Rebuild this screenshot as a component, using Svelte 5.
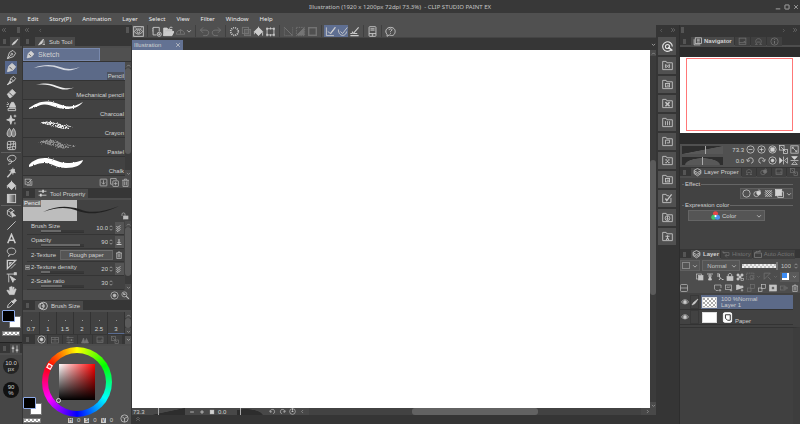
<script>
  const icons = {
    pen: '<path d="M2 14 5 5 10 2l4 4-3 5z"/><path d="M2 14l5-5"/><circle cx="8.500" cy="7.500" r="1.300"/>',
    marker: '<path d="M2 14 4 6l5-4 5 5-4 5z" fill="currentColor"/><path d="M5 7l4 4" stroke="#444"/>',
    brushpen: '<path d="M2 14l3-3 2-6 4-3 3 3-3 4-6 3z"/><path d="M2 14l4-5 2 2z" fill="currentColor"/><path d="M7 5l4 4"/>',
    eraser: '<path d="M2 9l7-7 5 5-7 7H5z" fill="currentColor"/><path d="M4.500 6.500l5 5" stroke="#444"/>',
    stamp: '<path d="M5 9l1-3 2-4h3l2 4 1 3z" fill="currentColor"/><path d="M3 11h11v3H3zM2 2l2 2M1 5h3M1 8h2"/>',
    sparkle: '<path d="M7 2l1.500 5L13 8.500 8.500 10 7 15 5.500 10 1 8.500 5.500 7z" fill="currentColor"/><path d="M13 1v4M11 3h4M13 12v3"/>',
    drops: '<path d="M5 2c4 5 4 12 0 12S0 8 5 2zM11 2c4 5 4 12 0 12s-4-7 0-12z" fill="currentColor" fill-opacity=".45"/>',
    mesh: '<rect x="2" y="2" width="12" height="12" rx="2"/><path d="M6 2c3 4-2 8 0 12M11 2c2 4-3 8-1 12M2 6c4 2 8-2 12 0M2 11c4 1 8-3 12-1"/>',
    lasso: '<path d="M5 11C0 8 2 3 8 2s8 4 5 7-9 3-9 0 5 0 4 3-4 2-5 3"/>',
    wand: '<path d="M2 15l6-7" stroke-width="2"/><path d="M10 1v10M5 5l9 3M6 9l7-6M13 9L7 3"/><circle cx="10" cy="6" r="2.500" fill="currentColor"/>',
    bucket: '<path d="M2 8l6-6 6 6-6 6z" fill="currentColor"/><path d="M8 7V1M14 9v5M2 8v4"/>',
    gradient: '<rect x="2" y="2" width="12" height="12" fill="url(#fade)"/>',
    object: '<path d="M12 6l-5-4-5 3v6l5 3M2 5l5 3 5-3M7 8v3"/><path d="M8 7l6 6-3 0-2 2z" fill="currentColor"/>',
    line: '<path d="M2 14L14 2"/>',
    text: '<path d="M2.500 15L8 2l5.500 13M4.500 10.500h7" stroke-width="2.200"/>',
    balloon: '<path d="M5 12C0 9 1 3 8 3s8 7 3 9c-2 1-3 0-4 0-1 2-2 2-4 3 2-1 2-2 2-3z"/>',
    ruler: '<path d="M2 2h12L2 14z" stroke-width="2"/><path d="M5 5h3L5 8z"/><path d="M7 14l7-7"/>',
    cursorline: '<path d="M1 3h12M4 3v12"/><path d="M6 6l8 5-3 1-1 3z" fill="currentColor"/><rect x="12" y="1" width="3" height="3" fill="currentColor"/>',
    hand: '<path d="M5 14L1 8l2-1 2 2V3h2v4V2h2v5l1-4h2l-1 5 2-3 2 1-3 8z" fill="currentColor" stroke-width=".5"/>',
    dropper: '<path d="M2 14l1-4 5-5 3 3-5 5z"/><path d="M8 4l4 4M10 5l3-3 1.500 1.500-3 3z" stroke-width="2" fill="currentColor"/>',
    eye: '<rect x="1" y="1" width="14" height="14"/><path d="M2 8c3-5 9-5 12 0-3 5-9 5-12 0z"/><circle cx="8" cy="8" r="2.200"/><path d="M5 4l-2-2M11 4l2-2"/>',
    newfile: '<path d="M8 13H3V2h9v6"/><path d="M3 4h-1M3 7h-1"/><circle cx="12" cy="12" r="3"/><path d="M12 10.500v3M10.500 12h3"/>',
    folder: '<path d="M1 14V3h5l1 2h6v2H4z" fill="currentColor"/><path d="M4 8h12l-3 6H1z" fill="currentColor"/><path d="M9 4c1-3 4-3 5-1"/>',
    share: '<path d="M2 12a6 6 0 0 1 12 0zM8 11V5M6 7l2-2 2 2"/>',
    down: '<path d="M3 6l5 5 5-5" stroke-width="2"/>',
    up: '<path d="M3 11l5-5 5 5" stroke-width="2"/>',
    left: '<path d="M10 3L5 8l5 5"/>',
    right: '<path d="M6 3l5 5-5 5"/>',
    lefts: '<path d="M8 3L3 8l5 5M13 3L8 8l5 5"/>',
    rights: '<path d="M3 3l5 5-5 5M8 3l5 5-5 5"/>',
    ups: '<path d="M3 8l5-5 5 5M3 13l5-5 5 5"/>',
    undo: '<path d="M6 2L2 6l4 4M2 6h8c6 0 5 8 0 8H6"/>',
    redo: '<path d="M10 2l4 4-4 4M14 6H6c-6 0-5 8 0 8h4"/>',
    busy: '<circle cx="8" cy="8" r="5.500" stroke-width="2.500" stroke-dasharray="1.500 1.400"/>',
    copy: '<rect x="2" y="2" width="9" height="9"/><rect x="5" y="5" width="9" height="9" fill="currentColor" fill-opacity=".4"/>',
    transform: '<rect x="3" y="4" width="10" height="9"/><path d="M1.500 4h3M11.500 4h3M1.500 13h3M11.500 13h3M3 2v4M13 2v4M3 11v4M13 11v4M8 2v3M8 12v3"/>',
    noselect: '<path d="M2 2v12M14 2v12M2 14h12" stroke-dasharray="1.500 1.500"/><path d="M2 2l12 12"/>',
    invert: '<rect x="2" y="2" width="12" height="12" stroke-dasharray="2 1.500"/><path d="M13 3v10H3z" fill="currentColor"/>',
    border: '<rect x="2.500" y="2.500" width="11" height="11" stroke-width="2"/>',
    snap: '<path d="M2 2v12h11M4 8l4 3 7-9"/><path d="M8 11l7-9" stroke-width="1.800"/>',
    snapcurve: '<path d="M2 5c0 11 11 11 12 3M5 8l3 3 7-9"/>',
    snapgrid: '<path d="M2 14h12M2 11h3M6 11l8-9M6 11h6M5 8v3" stroke-width="1.600"/>',
    phone: '<rect x="3" y="1" width="10" height="14" rx="1"/><path d="M3 11h10M5 4h6M5 6h6"/><circle cx="8" cy="13" r=".8"/>',
    help: '<path d="M6 13L3 15V12C-1 8 2 2 8 2s8 5 6 9-5 3-8 2z"/><path d="M6 6c0-3 5-2 4 0L8 8v1M8 10.500v1"/>',
    brush: '<path d="M2 14l3-5 9-7-6 9z" fill="currentColor"/>',
    brushes: '<path d="M1 14l4-6 6-6-3 9zM12 5v9M9 13h5" fill="currentColor"/>',
    sliders: '<path d="M1 4h14M1 11h14" stroke-width="1.500"/><path d="M9 1.500v5M5 8.500v5" stroke-width="3"/>',
    vsliders: '<path d="M4 1v14M12 1v14" stroke-width="1.500"/><path d="M1.500 6h5M9.500 10h5" stroke-width="2.500"/>',
    rings: '<circle cx="5.500" cy="8" r="4.500"/><circle cx="9" cy="8" r="6"/><circle cx="8" cy="8" r="1.500"/>',
    target: '<circle cx="8" cy="8" r="6.500"/><circle cx="8" cy="8" r="2.500" fill="currentColor"/>',
    check: '<rect x="2" y="2" width="9" height="9"/><path d="M5 13h9V5M4 6l3 3 7-7"/>',
    download: '<rect x="2" y="2" width="12" height="12" rx="1"/><path d="M8 4v7M5 8l3 3 3-3"/>',
    addcopy: '<path d="M4 11H1V1h10v3"/><rect x="5" y="5" width="10" height="10" rx="1"/><path d="M10 7v6M7 10h6"/>',
    trash: '<path d="M2 4h12M6 4V2h4v2M3.500 4v11h9V4M6.500 6v7M9.500 6v7"/>',
    unlock: '<rect x="5" y="8" width="9" height="6" fill="currentColor"/><path d="M2 8V4c0-3 6-3 6 0v4"/>',
    dynamics: '<path d="M3 4l2 3 6-4M3 8l2 3 6-4M3 12l2 3 6-4" stroke-width="1.500"/>',
    press: '<path d="M8 2v8M5 8l3 3 3-3M3 13h10" stroke-width="1.800"/>',
    wrench: '<circle cx="6" cy="6" r="4.500"/><path d="M9 9l5 5M5 3v3h3" stroke-width="2"/>',
    pages: '<rect x="4" y="1.500" width="11" height="10"/><path d="M2 4v10h11"/><path d="M7 4h5M7 6.500h5M7 9h5"/>',
    frame: '<rect x="2" y="2" width="12" height="11"/><path d="M2 10h12M10 8h3"/>',
    cap: '<path d="M2 13h4c-5-4-3-10 2-10s7 6 2 10h4M5 9h6"/>',
    info: '<circle cx="8" cy="8" r="6.500"/><path d="M8 7v5M8 4v1.500" stroke-width="1.800"/>',
    quick: '<path d="M13 13A7 7 0 1 1 15 8" stroke-width="1.600"/><circle cx="8" cy="8" r="3" stroke-width="1.600"/><path d="M9 9l6 5" stroke-width="2.200"/>',
    material: '<path d="M1 14V2h5l1 2h8v10z"/><rect x="5" y="6.500" width="6" height="5"/><path d="M7 9h3"/>',
    materialbrush: '<path d="M1 14V2h5l1 2h8v10z"/><path d="M5 6l6 6M11 6l-6 6"/><path d="M5 7v4M11 7v4"/>',
    materialx: '<path d="M1 14V2h5l1 2h8v10z"/><path d="M5 6l6 6M11 6l-6 6" stroke-width="2.200"/>',
    materiallines: '<path d="M1 14V2h5l1 2h8v10z"/><path d="M5 6v6M8 6v6M11 6v6"/>',
    materialpage: '<path d="M1 14V2h5l1 2h8v10z"/><path d="M5 12V6h6v4H7"/>',
    materialdots: '<path d="M1 14V2h5l1 2h8v10z"/><path d="M5 7h2M9 7h2M7 9h2M5 11h2M9 11h2" stroke-width="2"/>',
    materialpen: '<path d="M13 7v7H1V2h5l1 2h3"/><path d="M5 8l2 3 7-9" stroke-width="2"/>',
    materialdown: '<path d="M1 14V2h5l1 2h8v10z"/><circle cx="8" cy="9" r="3.500"/><path d="M8 6v5M6.500 9.500L8 11l1.500-1.500"/>',
    materialman: '<path d="M1 14V2h5l1 2h8v10z"/><path d="M8 6v4M5 7.500h6M8 10l-2 3M8 10l2 3" stroke-width="1.500"/>',
    minuscircle: '<circle cx="8" cy="8" r="6.500"/><path d="M4.500 8h7"/>',
    pluscircle: '<circle cx="8" cy="8" r="6.500"/><path d="M4.500 8h7M8 4.500v7"/>',
    fitcircle: '<circle cx="8" cy="8" r="6.500"/><rect x="5" y="5" width="6" height="6" fill="currentColor"/>',
    minus: '<path d="M3 8h10" stroke-width="2"/>',
    plus: '<path d="M3 8h10M8 3v10" stroke-width="2"/>',
    stop: '<rect x="3" y="3" width="10" height="10" fill="currentColor"/>',
    fit: '<rect x="1" y="1" width="8" height="8"/><rect x="8" y="8" width="7" height="7"/><path d="M3 3l9 9"/>',
    full: '<rect x="1.500" y="1.500" width="13" height="13"/><path d="M4 7V4h3M12 9v3H9M4 4l8 8"/>',
    rotl: '<path d="M3 9a5 5 0 1 1 6 4M1 6l2 4 4-2"/>',
    rotr: '<path d="M13 9a5 5 0 1 0-6 4M15 6l-2 4-4-2"/>',
    reset: '<circle cx="8" cy="8" r="6.500"/><path d="M8 1v5M6 8h4" stroke-width="2"/>',
    fliph: '<path d="M8 1v14"/><path d="M1 3l5 5-5 5z" fill="currentColor"/><path d="M15 3l-5 5 5 5z"/>',
    flipv: '<path d="M1 8h14"/><path d="M3 1l5 5 5-5z" fill="currentColor"/><path d="M3 15l5-5 5 5z"/>',
    layers: '<path d="M8 1l6 3v6l-6 4-6-4V4z"/><path d="M2 5l6 3 6-3M2 8l6 3 6-3"/>',
    circle: '<circle cx="8" cy="8" r="6.500"/>',
    tone: '<circle cx="6" cy="9" r="4.500"/><circle cx="10" cy="7" r="3.500" fill="currentColor"/><path d="M10 1l4 3"/>',
    dots: '<path d="M2 2l12 12M6 2l8 8M10 2l4 4M2 6l8 8M2 10l4 4M14 2L2 14M10 2l-8 8M6 2L2 6M14 6l-8 8M14 10l-4 4" stroke-width="1.200"/>',
    stack: '<rect x="5" y="5" width="10" height="10"/><rect x="1" y="1" width="11" height="11" fill="currentColor"/>',
    rgb: '<circle cx="8" cy="5" r="4.500" fill="#e74646" stroke="none"/><circle cx="5" cy="11" r="4.500" fill="#3fc46d" stroke="none"/><circle cx="11.500" cy="11" r="4.500" fill="#4a91ef" stroke="none"/><circle cx="8" cy="9" r="2" fill="#fff" stroke="none"/>',
    history: '<path d="M2 2v4h5M2 5h12v6H7M10 8l-4 3 4 4"/>',
    clap: '<path d="M1 6h14v9H1zM1 5l13-3M4 5l2-3M9 4l2-3" stroke-width="1.800"/>',
    clip: '<rect x="1" y="2" width="10" height="10"/><rect x="5" y="5" width="9" height="9" fill="currentColor"/>',
    lighthouse: '<path d="M2 2h12M4 6h8M8 2v6M5 14l2-6h2l2 6z" fill="currentColor" stroke-width="1.700"/>',
    draft: '<path d="M2 2h5v6l5 5h3M2 6h5M9 10l-3 4" stroke-width="2"/>',
    lock: '<rect x="2" y="7" width="12" height="8" fill="currentColor"/><path d="M4.500 7V4c0-4 7-4 7 0v3" stroke-width="1.800"/>',
    lockdots: '<path d="M2 2h4v4H2zM10 2h4v4h-4zM6 6h4v4H6zM2 10h4v4H2z" fill="currentColor"/><rect x="10" y="11" width="5" height="4"/>',
    mask: '<rect x="1" y="2" width="13" height="11" stroke-dasharray="3 1"/><circle cx="10" cy="9" r="3"/>',
    rulerdown: '<path d="M2 2h11L2 13zM9 9l5 5"/>',
    tiles: '<rect x="1" y="3" width="14" height="11"/><path d="M1 7h14M8 3v4M5 10h6"/>',
    bars: '<path d="M1 3h14M1 8h14M1 13h14"/><path d="M4 1v4M11 6v4M6 11v4" stroke-width="2"/>',
    peaks: '<path d="M1 14L5 4l3 10zM7 14l4-9 4 9z" fill="currentColor"/>',
    list: '<rect x="1" y="1" width="14" height="14" rx="2"/><path d="M1 8h14"/>',
    newlayer: '<path d="M9 13H4L1 10V2h13v6"/><path d="M12 10v5M9.500 12.500h5"/>',
    vector: '<rect x="1" y="2" width="12" height="9"/><path d="M4 8c1-5 4 2 6-3M12 10v5M9.500 12.500h5"/>',
    newfolder: '<path d="M1 12V2h5l1 2h7v4" fill="currentColor"/><path d="M12 10v5M9.500 12.500h5"/>',
    merge: '<rect x="7" y="1" width="8" height="8"/><rect x="1" y="8" width="7" height="7"/>',
    maskfill: '<rect x="1" y="2" width="14" height="12" fill="currentColor"/><circle cx="8" cy="8" r="3" fill="#4d4d4d"/>',
    apply: '<rect x="1" y="4" width="9" height="8"/><path d="M6 8h9M12 5l3 3-3 3"/>',
    view: '<path d="M1 8c3-6 11-6 14 0-3 5-11 5-14 0z"/><circle cx="8" cy="8" r="3" fill="currentColor"/>',
    paper: '<rect x="2" y="1" width="12" height="14" rx="2" fill="#fff" stroke="#fff"/><path d="M5 4h7v8H8L5 9z" stroke="#222"/>',
    min: '<path d="M2 13h12" stroke-width="2"/>',
    max: '<rect x="2.500" y="2.500" width="11" height="11" rx="1" stroke-width="2"/>',
    close: '<path d="M3 3l10 10M13 3L3 13" stroke-width="1.800"/>',
    spin: '<path d="M4 6l4-4 4 4M4 10l4 4 4-4" stroke-width="1.500"/>',
    cube: '<circle cx="8" cy="8" r="6.500"/><path d="M8 8l-4-3M8 8l5-3M8 8v6"/>'
  };

  const menus = ['File', 'Edit', 'Story(P)', 'Animation', 'Layer', 'Select', 'View', 'Filter', 'Window', 'Help'];
  const tools = [
    ['pen', 'marker', 'brushpen', 'eraser', 'stamp', 'sparkle', 'drops', 'mesh'],
    ['lasso', 'wand', 'bucket', 'gradient'],
    ['object', 'line', 'text', 'balloon', 'ruler', 'cursorline', 'hand', 'dropper']
  ];
  let activeTool = $state('marker');

  const commands = [
    ['eye'], ['newfile', 'folder', 'share', 'down'], ['undo', 'redo'],
    ['busy', 'copy', 'bucket', 'transform'], ['noselect', 'invert', 'border'],
    ['snap', 'snapcurve', 'snapgrid'], ['phone'], ['help']
  ];
  const disabled = ['share', 'undo', 'redo', 'copy', 'noselect', 'invert', 'border'];
  const pressed = ['snap', 'snapcurve'];

  const fat = 'M6 8C12 4 17 1 25 1.500C34 2 40 7 47 6.500C53 6 56 4 60 2C56 7 50 9 43 9C33 9 28 4 21 4.500C15 5 12 8 6 9Z';
  const brushes = [
    { name: 'Pencil', d: 'M11 6C20 2 30 2.500 37 5C44 7.500 50 7.500 57 5C49 9.500 43 9 36 6.500C28 3.500 22 3.500 11 6Z', tone: '#d5d9e2' },
    { name: 'Mechanical pencil', d: 'M13 4C22 1.500 28 2.500 34 5C41 7.500 45 8 51 6.500C44 9.500 39 9 33 6.500C27 4 21 3 13 4Z', tone: '#eee' },
    { name: 'Charcoal', d: fat, tone: '#fff', rough: 'rough' },
    { name: 'Crayon', d: 'M17 4C23 1 28 3 34 4C40 6 45 6 50 8C43 11 38 10 32 8C27 5 22 6 17 4Z', tone: '#eee', rough: 'grain' },
    { name: 'Pastel', d: 'M15 4C22 1 29 1 36 4C41 7 46 7 53 7C47 10 40 12 33 9C27 6 21 7 15 4Z', tone: '#909090', rough: 'grain' },
    { name: 'Chalk', d: 'M6 8C10 3 18 0 26 1.500C33 3 37 6 44 6C52 6 56 4 60 3C59 8 52 11 43 11C33 11 29 6 21 6C14 6 11 9 6 10Z', tone: '#fff', rough: 'rough' }
  ];
  let activeBrush = $state('Pencil');

  const props = [
    { label: 'Brush Size', value: '10.0', fill: 46, end: 'dynamics' },
    { label: 'Opacity', value: '90', fill: 90, end: 'press' },
    { label: '2-Texture', choice: 'Rough paper', end: 'trash' },
    { label: '2-Texture density', value: '20', fill: 20, end: 'dynamics', open: true },
    { label: '2-Scale ratio', value: '30', fill: 50 }
  ];
  const sizes = ['0.7', '1', '1.5', '2', '2.5', '3'];
  const colorTabs = ['tiles', 'bars', 'peaks', 'frame', 'fit'];
  const dock = ['quick', 'materialbrush', 'material', 'materialx', 'materiallines', 'materialpage', 'materialdots', 'material', 'materialpen', 'materialdown', 'materialman'];
</script>

{#snippet icon(name, size = 9)}
  <svg width={size} height={size} viewBox="0 0 16 16" fill="none" stroke="currentColor" stroke-width="1.300" aria-hidden="true">{@html icons[name]}</svg>
{/snippet}

{#snippet vscroll(cls)}
  <div class="vscroll {cls}">
    <button aria-label="Scroll up">{@render icon('up', 5)}</button>
    <div class="track"><i></i></div>
    <button aria-label="Scroll down">{@render icon('down', 5)}</button>
  </div>
{/snippet}

{#snippet swatches()}
  <div class="swatches">
    <button class="sub" aria-label="Sub color"></button>
    <button class="main" aria-label="Main color"></button>
  </div>
  <button class="clear checker" aria-label="Transparent color"></button>
{/snippet}

<svg class="defs" width="0" height="0" aria-hidden="true">
  <defs>
    <linearGradient id="fade"><stop offset="0" stop-color="#ddd" /><stop offset="1" stop-color="#444" /></linearGradient>
    <filter id="rough" x="-.1" y="-.3" width="1.200" height="1.600"><feTurbulence type="fractalNoise" baseFrequency=".6" numOctaves="2" seed="4" /><feDisplacementMap in="SourceGraphic" scale="2" xChannelSelector="R" yChannelSelector="G" /></filter>
    <filter id="grain" x="-.1" y="-.3" width="1.200" height="1.600"><feTurbulence type="fractalNoise" baseFrequency=".6" numOctaves="2" seed="7" result="n" /><feDisplacementMap in="SourceGraphic" in2="n" scale="3" xChannelSelector="R" yChannelSelector="G" result="d" /><feColorMatrix in="n" values="0 0 0 0 0 0 0 0 0 0 0 0 0 0 0 0 0 0 5 -1.700" result="m" /><feComposite in="d" in2="m" operator="in" /></filter>
  </defs>
</svg>

<div class="app">
  <header class="title">
    <span></span>
    <h1>Illustration (1920 x 1200px 72dpi 73.3%) &nbsp;- CLIP STUDIO PAINT EX</h1>
    <div class="window">
      <button aria-label="Minimize">{@render icon('min', 6)}</button>
      <button aria-label="Maximize">{@render icon('max', 6)}</button>
      <button aria-label="Close">{@render icon('close', 6)}</button>
    </div>
  </header>
  <nav class="menu">
    {#each menus as m}<button>{m}</button>{/each}
  </nav>

  <div class="body">
    <aside class="toolcol">
      <div class="collapse">{@render icon('lefts', 6)}<b></b></div>
      <div class="tabs"><b></b><button class="tab on" aria-label="Tool">{@render icon('brush', 8)}</button></div>
      <div class="tools">
        {#each tools as group}
          <div class="group">
            {#each group as t}
              <button class:on={activeTool === t} aria-label={t} onclick={() => (activeTool = t)}>{@render icon(t, 11)}</button>
            {/each}
          </div>
        {/each}
      </div>
      <div class="colors">{@render swatches()}</div>
      <div class="quick">
        <div class="tabs"><b></b><button class="tab on" aria-label="Slider">{@render icon('vsliders', 8)}</button></div>
        <button class="disc">10.0<br />px</button>
        <button class="disc dark">90<br />%</button>
      </div>
    </aside>

    <aside class="side">
      <div class="collapse">{@render icon('lefts', 6)}<span class="single">{@render icon('left', 5)}</span><b></b></div>
      <div class="tabs"><b></b><button class="tab on">{@render icon('brushes', 8)}Sub Tool</button></div>
      <div class="sketch"><button>{@render icon('marker', 9)}Sketch</button></div>
      <div class="scroller">
        <div class="brushes">
          {#each brushes as b}
            <button class:on={activeBrush === b.name} onclick={() => (activeBrush = b.name)}>
              <svg width="64" height="14" viewBox="0 0 64 14" aria-hidden="true"><path d={b.d} fill={b.tone} filter={b.rough ? `url(#${b.rough})` : null} /></svg>
              <span>{b.name}</span>
            </button>
          {/each}
        </div>
        {@render vscroll('list')}
      </div>
      <div class="foot between">
        <button aria-label="Select all">{@render icon('check')}</button>
        <span>
          <button aria-label="Import">{@render icon('download')}</button>
          <button aria-label="Duplicate">{@render icon('addcopy')}</button>
          <button aria-label="Delete">{@render icon('trash')}</button>
        </span>
      </div>

      <div class="tabs"><b></b><button class="tab on">{@render icon('sliders')}Tool Property</button></div>
      <div class="preview">
        <div class="light"><span>Pencil</span></div>
        <svg class="curve" width="80" height="16" viewBox="0 0 80 16" aria-hidden="true">
          <path d="M2 9C16 2 28 3 38 6C50 11 62 9 78 3C62 11 50 12 37 8C27 4 16 4 2 9Z" fill="#222" />
        </svg>
        <button aria-label="Lock">{@render icon('unlock', 8)}</button>
      </div>
      <div class="scroller">
        <div class="props">
          {#each props as p}
            <div class="prop">
              {#if p.choice}
                <span>{p.label}</span><button class="choice">{p.choice}</button>
              {:else}
                {#if p.open}<button class="toggle" aria-label="Collapse texture settings"></button>{/if}
                <label>{p.label}<input type="range" value={p.fill} style:--fill="{p.fill}%" /></label>
                <input class="num" value={p.value} aria-label="{p.label} value" />{@render icon('spin', 6)}
              {/if}
              <span class="end">{#if p.end}<button class:boxed={p.end !== 'trash'} aria-label="{p.label} settings">{@render icon(p.end, 8)}</button>{/if}</span>
            </div>
          {/each}
        </div>
        {@render vscroll('prop-scroll')}
      </div>
      <div class="foot right">
        <button aria-label="Reset">{@render icon('target')}</button>
        <button aria-label="Detail">{@render icon('wrench')}</button>
      </div>

      <div class="tabs"><b></b><button class="tab on">{@render icon('rings', 10)}Brush Size</button></div>
      <div class="scroller">
        <div class="sizes">
          {#each sizes as s}<button class:on={s === '3'}><i></i>{s}</button>{/each}
        </div>
        {@render vscroll('size-scroll')}
      </div>

      <div class="tabs colortabs"><b></b>
        <button class="tab on" aria-label="Color wheel">{@render icon('target')}</button>
        {#each colorTabs as c}<button class="tab" aria-label={c}>{@render icon(c, 8)}</button>{/each}
        <button class="more" aria-label="More">{@render icon('down', 5)}</button>
      </div>
      <div class="color">
        <div class="wheel">
          <div class="hole"><div class="square"><i></i></div></div>
          <i class="hue"></i>
        </div>
        <div class="colorfoot">
          <div>{@render swatches()}</div>
          <div class="hsv"><i>H</i> 0 <i>S</i> 0 <i>V</i> 0</div>
          <button aria-label="Switch color space">{@render icon('cube')}</button>
        </div>
      </div>
    </aside>

    <main>
      <div class="commands">
        {#each commands as group}
          <div class="cgroup">
            {#each group as c}
              <button class:narrow={c === 'down'} class:on={pressed.includes(c)} class:off={disabled.includes(c)} aria-label={c}>{@render icon(c, c === 'down' ? 6 : 11)}</button>
            {/each}
          </div>
        {/each}
      </div>
      <div class="doctabs">
        <button class="doc">Illustration {@render icon('close', 6)}</button>
        <span>{@render icon('down', 5)}</span>
      </div>
      <div class="workspace">
        <div class="canvas"></div>
        {@render vscroll('canvas-scroll')}
      </div>
      <div class="status">
        <span class="zoomv">73.3</span>
        <input type="range" class="wedge" value="30" aria-label="Zoom" />
        <button aria-label="Zoom out">{@render icon('minus', 6)}</button>
        <button aria-label="Zoom in">{@render icon('plus', 6)}</button>
        <button aria-label="Fit">{@render icon('stop', 6)}</button>
        <span class="angle">0.0</span>
        <input type="range" class="wedge hill" value="10" aria-label="Rotate" />
        <button aria-label="Rotate left">{@render icon('rotl', 7)}</button>
        <button aria-label="Rotate right">{@render icon('rotr', 7)}</button>
        <button aria-label="Reset rotation">{@render icon('reset', 7)}</button>
        <button aria-label="Scroll left">{@render icon('left', 5)}</button>
        <div class="hscroll"><i></i></div>
        <button aria-label="Scroll right">{@render icon('right', 5)}</button>
        <span class="corner"></span>
      </div>
      <div class="timeline">{@render icon('ups', 6)}</div>
    </main>

    <aside class="dock">
      <div class="collapse">{@render icon('left', 5)}{@render icon('rights', 6)}</div>
      {#each dock as d, n}
        <button aria-label="Material {n}">{@render icon(d, 11)}</button>
      {/each}
    </aside>

    <aside class="panels">
      <div class="collapse"><b></b><span class="push">{@render icon('right', 5)}</span>{@render icon('rights', 6)}</div>
      <div class="tabs wide"><b></b><button class="tab on bold">{@render icon('pages')}Navigator</button>
        <button class="tab" aria-label="Sub view">{@render icon('frame')}</button>
        <button class="tab" aria-label="Item bank">{@render icon('cap')}</button>
        <button class="tab" aria-label="Information">{@render icon('info')}</button>
      </div>
      <div class="navigator"><div class="sheet"><div class="view"></div></div></div>
      <div class="navctl">
        <div>
          <input type="range" class="wedge" value="58" aria-label="Navigator zoom" />
          <span>73.3</span>
          {#each ['minuscircle', 'pluscircle', 'fitcircle', 'fit', 'full'] as c}<button aria-label={c}>{@render icon(c)}</button>{/each}
        </div>
        <div>
          <input type="range" class="wedge hill" value="50" aria-label="Navigator rotation" />
          <span>0.0</span>
          {#each ['rotl', 'rotr', 'target', 'fliph', 'flipv'] as c}<button aria-label={c}>{@render icon(c)}</button>{/each}
        </div>
      </div>

      <div class="tabs wide"><b></b><button class="tab on">{@render icon('layers')}Layer Proper</button>
        {#each ['cap', 'tone', 'frame', 'fit'] as c}<button class="tab" aria-label={c}>{@render icon(c, 8)}</button>{/each}
      </div>
      <div class="layerprop">
        <h2>Effect</h2>
        <div class="effects">
          {#each ['circle', 'tone', 'dots', 'stack'] as c}<button aria-label={c}>{@render icon(c)}</button>{/each}
          <button aria-label="More effects">{@render icon('down', 6)}</button>
        </div>
        <h2>Expression color</h2>
        <div class="pick expression">{@render icon('rgb')}<select aria-label="Expression color"><option>Color</option></select>{@render icon('down', 6)}</div>
      </div>

      <div class="tabs"><b></b><button class="tab on bold">{@render icon('layers')}Layer</button>
        <button class="tab">{@render icon('history', 8)}History</button>
        <button class="tab">{@render icon('clap', 8)}Auto Action</button>
      </div>
      <div class="layerctl">
        <div class="row">
          <button class="palette" aria-label="Palette color"><i></i>{@render icon('down', 6)}</button>
          <div class="pick blend"><select aria-label="Blending mode"><option>Normal</option></select>{@render icon('down', 6)}</div>
          <input type="range" class="opacity" value="100" aria-label="Layer opacity" />
          <input class="num" value="100" aria-label="Opacity value" />{@render icon('spin', 6)}
        </div>
        <div class="row end-row">
          {#each ['clip', 'lighthouse', 'draft', 'lock', 'lockdots'] as c}<button aria-label={c}>{@render icon(c, 8)}</button>{/each}
          <button class="off" aria-label="Mask">{@render icon('mask')}{@render icon('down', 5)}</button>
          <button class="off" aria-label="Ruler range">{@render icon('rulerdown')}{@render icon('down', 5)}</button>
          <button class="tint" aria-label="Layer color"><i></i>{@render icon('down', 5)}</button>
        </div>
        <div class="row between-row">
          <button aria-label="Two panes">{@render icon('list', 8)}</button>
          <span>
            {#each ['newlayer', 'vector', 'newfolder', 'merge', 'merge', 'maskfill', 'apply', 'trash'] as c, n}<button class:off={n === 3 || n === 6} aria-label={c}>{@render icon(c, 8)}</button>{/each}
          </span>
        </div>
      </div>
      <div class="layers">
        <div class="layer">
          <button aria-label="Show Layer 1">{@render icon('view', 8)}</button><span class="edit">{@render icon('brush', 8)}</span>
          <div class="info on"><span class="thumb checker"></span><p>100 %Normal<br />Layer 1</p></div>
        </div>
        <div class="layer">
          <button aria-label="Show Paper">{@render icon('view', 8)}</button><span class="edit"></span>
          <div class="info"><span class="thumb"></span><span class="sheeticon">{@render icon('paper', 11)}</span><p class="low">Paper</p></div>
        </div>
      </div>
      <div class="rest"></div>
    </aside>
  </div>
</div>

<style>
  :global(body) { margin: 0; background: #383838; }
  .defs { position: absolute; }
  .app { height: 100vh; display: flex; flex-direction: column; overflow: hidden; background: #353535; color: #d2d2d2; font: 6px/8px "Liberation Sans", Arial, sans-serif; }
  .app * { box-sizing: border-box; }
  svg { display: block; flex: none; }
  button, input, select { font: inherit; color: inherit; background: none; border: 0; padding: 0; margin: 0; border-radius: 0; }
  button { display: flex; align-items: center; justify-content: center; flex: none; }
  select { appearance: none; text-align: center; }
  h1, h2, p { margin: 0; font: inherit; }

  .title { height: 13px; flex: none; display: grid; grid-template-columns: 1fr auto 1fr; align-items: center; background: #383838; font-family: "Noto Sans", sans-serif; color: #c4c4c4; }
  .title h1 { white-space: nowrap; }
  .window { display: flex; justify-content: flex-end; gap: 3px; padding-right: 1px; }
  .menu { height: 12px; flex: none; display: flex; gap: 11px; padding-left: 7px; background: #505050; font-family: "Noto Sans", sans-serif; color: #ececec; }
  .body { flex: 1; min-height: 0; display: grid; grid-template-columns: 22px 108px minmax(0, 1fr) 21px 121px; column-gap: 1px; }
  .body > * { min-width: 0; min-height: 0; display: flex; flex-direction: column; }

  .collapse { height: 11px; flex: none; display: flex; align-items: center; gap: 6px; padding: 0 2px 1px 1px; color: #8c8c8c; }
  .collapse b { width: 3px; height: 6px; background: #555; margin-left: auto; }
  .single { margin-left: 2px; }
  .tabs { height: 12px; flex: none; display: flex; align-items: center; gap: 1px; padding-top: 1px; border-bottom: 2px solid #4d4d4d; color: #c2c2c2; }
  .tabs b { width: 3px; height: 5px; margin: 0 5px 0 3px; background: #555; flex: none; }
  .tab { height: 9px; padding: 0 3px; gap: 3px; background: #404040; color: #747474; white-space: nowrap; }
  .tab.on { background: #4a4a4a; color: #d2d2d2; }
  .bold { font-weight: bold; }

  .toolcol { background: #424242; }
  .toolcol .collapse, .toolcol .tabs { background: #363636; }
  .toolcol .tabs b { margin-right: 3px; }
  .toolcol .tab { padding: 0 1px; }
  .tools { padding: 0 1px; }
  .group { border-bottom: 1px solid #606060; }
  .group:last-child { border: 0; }
  .group button { width: 12px; height: 13px; margin: 0 auto 0 4px; color: #ccc; }
  .group .on { background: #56678c; }
  .colors { padding: 0 2px; margin-bottom: 6px; }
  .swatches { display: grid; grid-template: 6px 6px 6px / 7px 6px 6px; }
  .main { grid-area: 1 / 1 / 3 / 3; background: #000; border: 1px solid #8ca9e6; border-radius: 1px; }
  .sub { grid-area: 2 / 2 / 4 / 4; background: #fff; border: 1px solid #777; }
  .checker { background: conic-gradient(#fff 25%, #aaa 0 50%, #fff 0 75%, #aaa 0) 0 0 / 4px 4px; }
  .clear { width: 18px; height: 5px; margin-top: 3px; border: 1px solid #777; }
  .quick { flex: 1; border-top: 1px solid #222; background: #464646; }
  .disc { width: 16px; height: 16px; margin: 3px auto 8px 3px; border-radius: 50%; background: #242424; line-height: 6px; }
  .dark { background: #111; }

  .side { background: #363636; }
  .sketch { display: flex; background: #505050; height: 14px; flex: none; border-bottom: 1px solid #333; }
  .sketch button { width: 77px; justify-content: flex-start; gap: 3px; padding-left: 2px; font-size: 7px; background: #637190; border: 1px solid #7989ad; }
  .scroller { display: flex; flex: none; background: #424242; }
  .scroller > :first-child { flex: 1; min-width: 0; }
  .brushes button { width: 100%; height: 19px; position: relative; align-items: flex-start; justify-content: flex-start; border-bottom: 1px solid #333; background: #424242; }
  .brushes button.on { background: #5c6a88; }
  .brushes span { position: absolute; right: 1px; bottom: 0; padding-left: 1px; background: #42424299; }
  .vscroll { width: 6px; flex: none; display: flex; flex-direction: column; background: #3b3b3b; color: #aaa; }
  .vscroll button { height: 6px; background: #4b4b4b; }
  .vscroll .track { flex: 1; display: grid; }
  .vscroll i { background: #5b5b5b; border-radius: 3px; }
  .list .track { grid-template-rows: 84% 1fr; }
  .prop-scroll .track { grid-template-rows: 86% 1fr; }
  .foot { height: 12px; flex: none; display: flex; align-items: center; background: #4b4b4b; padding: 0 1px; color: #bcbcbc; }
  .foot span { display: flex; gap: 2px; }
  .between { justify-content: space-between; }
  .right { justify-content: flex-end; gap: 2px; height: 10px; }

  .preview { height: 21px; flex: none; display: grid; grid-template-columns: 1fr 1fr; background: #424242; color: #bbb; }
  .light { grid-area: 1 / 1; background: #bdbdbd; color: #f4f4f4; display: flex; align-items: flex-start; }
  .light span { background: #6c6c6c; padding: 0 1px; line-height: 7px; }
  .curve { grid-area: 1 / 1 / 2 / 3; margin: 3px 0 0 18px; z-index: 1; }
  .preview button { grid-area: 1 / 2; margin: 10px 2px 0 auto; }
  .props { padding: 0 1px 0 4px; }
  .prop { height: 14px; display: flex; align-items: center; border-bottom: 1px solid #353535; position: relative; }
  .prop:nth-child(3) { height: 13px; }
  .prop label { flex: 1; display: block; padding: 0 4px; white-space: nowrap; }
  .prop > span:first-child { padding-left: 4px; width: 33px; }
  .prop input[type=range] { display: block; appearance: none; width: 43px; height: 3px; margin-left: 10px; background: linear-gradient(90deg, #6a6a6a var(--fill), #383838 0); border: solid #333; border-width: 0 0 1px; }
  .prop input[type=range]::-webkit-slider-thumb { appearance: none; width: 0; }
  .toggle { position: absolute; left: -2px; top: 3px; width: 5px; height: 5px; background: linear-gradient(#aaa, #aaa) center / 3px 1px no-repeat #606060; border: 1px solid #777; }
  .num { width: 16px; height: 8px; text-align: right; }
  .prop .end { width: 10px; display: flex; justify-content: center; }
  .boxed { background: #555; width: 9px; height: 12px; }
  .choice { flex: 1; height: 10px; background: #555; border: 1px solid #666; border-top-color: #707070; margin-right: 1px; }

  .sizes { display: grid; grid-template-columns: repeat(6, 1fr); }
  .sizes button { height: 22px; flex-direction: column; justify-content: flex-end; gap: 4px; border-right: 1px solid #333; padding-bottom: 1px; }
  .sizes i { width: 1px; height: 1px; background: #999; }
  .sizes .on { border-bottom: 1px solid #5a6c92; padding: 0; }
  .colortabs .tab { width: 14px; }
  .colortabs .on { width: 12px; }
  .more { width: 6px; height: 8px; margin-left: auto; background: #555; }
  .color { flex: 1; min-height: 0; background: #505050; display: grid; }
  .color > * { grid-area: 1 / 1; }
  .wheel { position: relative; width: 70px; height: 70px; margin: 1px auto 0; border-radius: 50%; display: grid; place-items: center; background: conic-gradient(from -60deg, red, yellow, lime, cyan, blue, magenta, red); }
  .hole { width: 58px; height: 58px; border-radius: 50%; background: #505050; display: grid; place-items: center; }
  .square { position: relative; width: 36px; height: 36px; background: linear-gradient(transparent, #000), linear-gradient(90deg, #fff, #f00); }
  .square i { position: absolute; left: -3px; bottom: -3px; width: 5px; height: 5px; border: 1px solid #ddd; border-radius: 50%; }
  .hue { position: absolute; left: 5px; top: 17px; width: 5px; height: 5px; border: 1px solid #fff; transform: rotate(30deg); background: #f33; }
  .colorfoot { z-index: 1; align-self: end; display: flex; align-items: flex-end; padding: 0 2px 1px 0; color: #ccc; }
  .hsv { display: flex; flex: 1; justify-content: flex-end; gap: 4px; padding-right: 7px; line-height: 6px; }
  .hsv i { font-style: normal; width: 5px; height: 5px; line-height: 5px; font-size: 5px; text-align: center; background: #ccc; color: #333; align-self: center; }

  .commands { height: 13px; flex: none; display: flex; background: #505050; border-bottom: 1px solid #444; }
  .cgroup { display: flex; }
  .cgroup + .cgroup { border-left: 1px solid #404040; padding-left: 2px; margin-left: 3px; }
  .cgroup button { width: 12px; color: #ccc; }
  .cgroup .narrow { width: 6px; }
  .cgroup button.on { background: #5f6f92; }
  .row button.off, .cgroup button.off { color: #757575; }
  .doctabs { height: 12px; flex: none; display: flex; justify-content: space-between; align-items: center; background: #363636; padding-top: 1px; }
  .doc { width: 51px; height: 10px; padding: 0 2px; justify-content: space-between; background: #637293; }
  .workspace { flex: 1; min-height: 0; display: flex; }
  .canvas { flex: 1; background: #fff; }
  .canvas-scroll .track { grid-template-rows: 30% 39% 31%; }
  .canvas-scroll i { grid-row: 2; }
  .status { height: 7px; flex: none; display: flex; align-items: center; gap: 3px; background: #484848; overflow: hidden; padding-left: 1px; }
  .zoomv { width: 11px; }
  .angle { width: 16px; }
  .wedge { appearance: none; flex: none; height: 8px; width: 41px; background: linear-gradient(to bottom right, #2e2e2e 48%, #585858 52%); }
  .wedge::-webkit-slider-thumb { appearance: none; width: 1px; height: 8px; background: #aaa; }
  .hill { background: radial-gradient(ellipse at 50% 100%, #585858 58%, #2e2e2e 62%); }
  .status .wedge { width: 38px; background: linear-gradient(to bottom right, #484848 48%, #2d2d2d 52%); }
  .status .hill { width: 29px; background: radial-gradient(ellipse at 30% 100%, #2d2d2d 58%, #484848 62%); }
  .status button { width: 7px; }
  .hscroll { flex: 1; align-self: stretch; display: grid; grid-template-columns: 31% 38% 31%; background: #424242; }
  .hscroll i { grid-column: 2; background: #626262; border-radius: 3px; }
  .corner { width: 2px; }
  .timeline { height: 9px; flex: none; padding: 1px 3px; color: #888; }

  .dock { gap: 2px; background: #353535; padding: 0 1px; }
  .dock .collapse { margin-bottom: -1px; gap: 6px; }
  .dock > button { width: 18px; height: 17px; background: #505050; color: #c4c4c4; }
  .dock > button:first-of-type { height: 18px; color: #e4e4e4; }

  .panels { background: #424242; border-left: 1px solid #2d2d2d; }
  .panels .collapse, .panels .tabs { background: #363636; }
  .panels .collapse b { margin: 0; }
  .push { margin-left: auto; }
  .panels .tabs { height: 11px; }
  .panels .tabs b { margin: 0 4px 0 3px; }
  .panels .tab { padding: 0 1px; gap: 2px; }
  .panels .wide .tab { padding: 0 3px; }
  .panels .wide .on { padding: 0 2px; }
  .navigator { height: 97px; flex: none; background: #2c2c2c; padding: 10px 0 11px; }
  .sheet { height: 76px; background: #fff; padding: 1px 7px 1px 6px; }
  .view { height: 73px; border: 1px solid #f77; }
  .navctl { height: 23px; flex: none; background: #505050; }
  .navctl > div { height: 11px; display: flex; align-items: center; gap: 2px; padding: 0 1px 0 2px; }
  .navctl span { flex: 1; text-align: right; }
  .layerprop { height: 71px; flex: none; padding: 2px 7px 0 2px; }
  .layerprop h2 { display: flex; align-items: center; gap: 1px; }
  .layerprop h2::before { content: ""; width: 2px; height: 1px; background: #666; }
  .layerprop h2::after { content: ""; flex: 1; height: 1px; background: #666; }
  .effects { display: flex; width: 53px; height: 11px; margin: 0 0 2px auto; gap: 2px; padding: 0 1px; background: #505050; border: 1px solid #5e5e5e; }
  .pick { display: flex; align-items: center; background: #555; border: 1px solid #656565; height: 11px; padding-right: 2px; }
  .pick select { flex: 1; min-width: 0; text-align-last: center; }
  .expression { width: 77px; margin: 1px 0 0 6px; padding-left: 22px; }
  .expression select { text-align-last: left; padding-left: 2px; }
  .layerctl { background: #4d4d4d; }
  .row { display: flex; align-items: center; height: 11px; gap: 2px; padding-right: 1px; color: #c4c4c4; }
  .palette { width: 20px; height: 11px; gap: 2px; background: #555; border: 1px solid #606060; }
  .palette i { width: 8px; height: 7px; border: 1px solid #888; }
  .blend { width: 38px; }
  .row .num { width: 11px; }
  .opacity { appearance: none; flex: 1; min-width: 0; height: 4px; background: conic-gradient(#eee 25%, #c4c4c4 0 50%, #eee 0 75%, #c4c4c4 0) 0 0 / 4px 4px; }
  .opacity::-webkit-slider-thumb { appearance: none; width: 2px; height: 8px; background: #777; }
  .end-row { justify-content: flex-end; }
  .row .off { gap: 1px; }
  .tint { gap: 3px; background: #5a5a5a; height: 10px; padding: 0 2px; }
  .tint i { width: 7px; height: 7px; background: #3d8df5; border: solid #fff; border-width: 0 2px 2px 0; }
  .between-row { justify-content: space-between; }
  .between-row span { display: flex; gap: 3px; }
  .layers { padding: 2px 7px 0 0; }
  .layer { height: 15px; display: flex; border-bottom: 1px solid #333; color: #ccc; }
  .layer button { width: 10px; }
  .edit { width: 9px; margin-right: 2px; display: flex; align-items: center; border: 1px solid #393939; }
  .info { flex: 1; display: flex; align-items: center; gap: 4px; padding-left: 1px; }
  .info.on { background: #5c6a88; }
  .info p { line-height: 6px; white-space: nowrap; }
  .thumb { width: 15px; height: 11px; background-color: #fff; border: 1px solid #ddd; }
  .sheeticon { margin-left: 1px; }
  .info .low { align-self: flex-end; margin-left: -2px; }
  .rest { flex: 1; margin-top: 2px; border-top: 1px solid #333; background: #404040; border-right: 7px solid #3d3d3d; }
</style>
